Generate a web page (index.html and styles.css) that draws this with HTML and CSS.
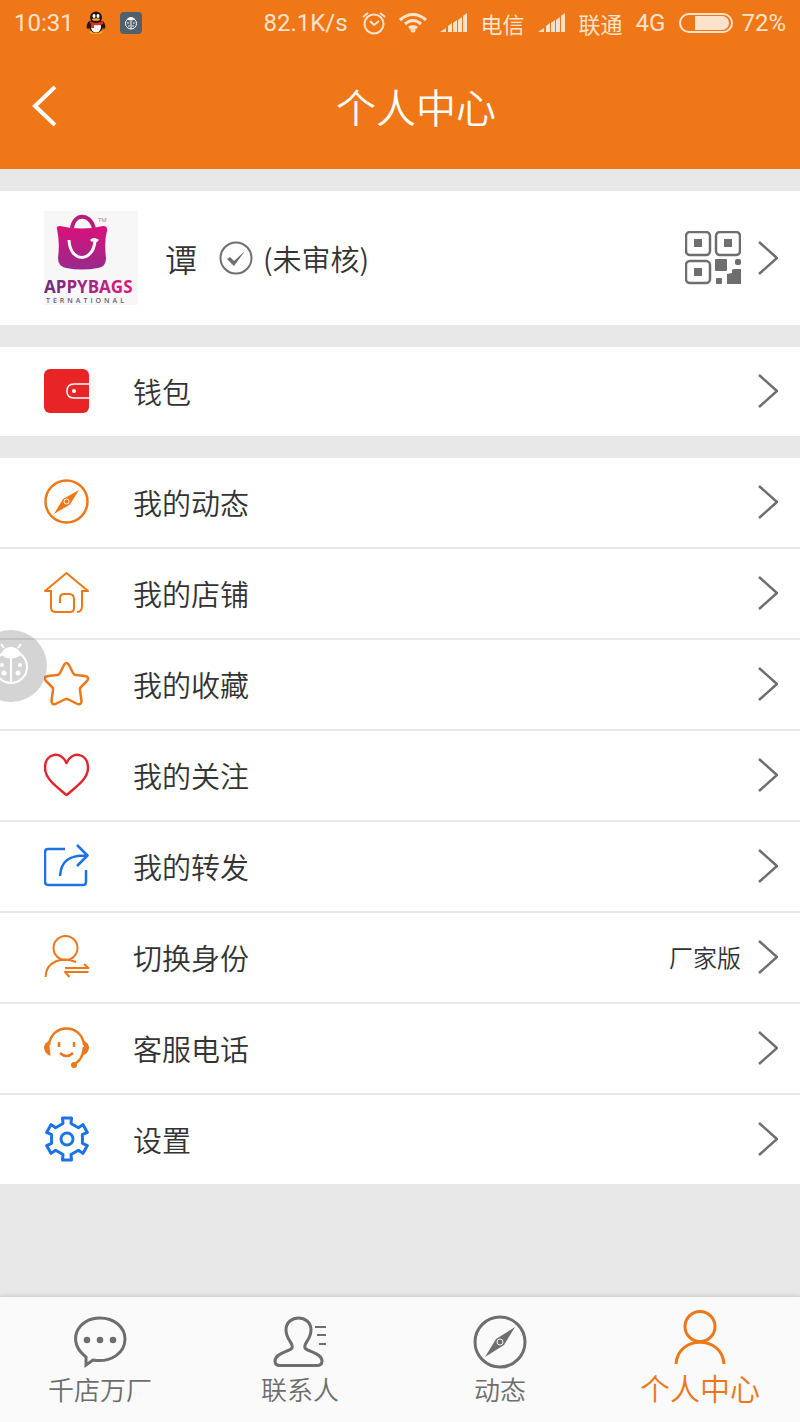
FILE: index.html
```html
<!DOCTYPE html>
<html lang="zh-CN">
<head>
    <meta charset="UTF-8">
    <meta name="viewport" content="width=device-width, initial-scale=1.0">
    <title>个人中心</title>
    <link rel="stylesheet" href="styles.css">
</head>
<body>

    <!-- shared shapes -->
    <svg class="defs" width="0" height="0">
        <symbol id="chevron" viewBox="0 0 20 34"><path d="M1 1l18 16L1 33"/></symbol>
        <symbol id="signal" viewBox="0 0 28 20"><path d="M0 19l6-4v4zM8 13l4-3v9H8zM13 10l4-3v12h-4zM18 7l4-3v15h-4zM23 3l4-3v19h-4z"/></symbol>
    </svg>

    <header class="top">
        <div class="status">
            <span class="status-text">10:31</span>
            <svg class="qq" viewBox="0 0 20 24">
                <ellipse cx="10" cy="21" rx="7" ry="2" fill="#f5a623"/>
                <path d="M3 10C0 14 0 17 2 18l3-2h10l3 2c2-1 2-4-1-8z" fill="#2a1512"/>
                <ellipse cx="10" cy="15" rx="7" ry="7" fill="#2a1512"/>
                <ellipse cx="10" cy="16" rx="5" ry="5.500" fill="#fff"/>
                <ellipse cx="10" cy="6.500" rx="6" ry="6" fill="#2a1512"/>
                <ellipse cx="8" cy="5" rx="1.500" ry="2" fill="#fff"/><ellipse cx="12" cy="5" rx="1.500" ry="2" fill="#fff"/>
                <ellipse cx="10" cy="8.500" rx="4" ry="1.300" fill="#f5a623"/>
                <path d="M3 10q7 4 14 0v3q-4 2-9 1v3H5v-4z" fill="#e0302d"/>
            </svg>
            <svg class="bug-app" viewBox="0 0 22 22">
                <rect width="22" height="22" rx="4" fill="#50606e"/>
                <circle cx="11" cy="11.500" r="5.500" fill="none" stroke="#fff"/>
                <path d="M7 7q4-4 8 0-4 3-8 0z" fill="#fff"/><path d="M11 9v8" stroke="#fff"/>
                <g fill="#fff"><circle cx="8" cy="11" r=".8"/><circle cx="14" cy="11" r=".8"/><circle cx="9" cy="14" r=".8"/><circle cx="13" cy="14" r=".8"/></g>
            </svg>

            <span class="status-text speed">82.1K/s</span>
            <svg class="alarm" viewBox="0 0 24 24">
                <circle cx="12" cy="13" r="9.500"/><path d="M8 10l4 4 5-4M1 6l5-4M23 6l-5-4"/>
            </svg>
            <svg class="wifi" viewBox="0 0 30 20">
                <path d="M2 7q13-11 26 0M7 11q8-7 16 0M11 15q4-3 8 0"/><circle cx="15" cy="17" r="1"/>
            </svg>
            <svg class="signal"><use href="#signal"/></svg>
            <span class="status-cn">电信</span>
            <svg class="signal"><use href="#signal"/></svg>
            <span class="status-cn">联通</span>
            <span class="status-text">4G</span>
            <svg class="battery" viewBox="0 0 54 20">
                <rect x="1" y="1" width="52" height="18" rx="9"/>
                <path d="M16 3h27a7 7 0 0 1 0 14H16z"/>
            </svg>
            <span class="status-text percent">72%</span>
        </div>

        <div class="title-bar">
            <button class="back" aria-label="返回">
                <svg viewBox="0 0 26 44"><path d="M23 3L3 22l20 19"/></svg>
            </button>
            <h1>个人中心</h1>
        </div>
    </header>

    <main>
        <a class="profile" href="#profile">
            <svg class="avatar" viewBox="0 0 94 94">
                <defs>
                    <linearGradient id="bag" x1="0" y1="0" x2="0" y2="1">
                        <stop offset="0" stop-color="#d9117a"/><stop offset="1" stop-color="#98298b"/>
                    </linearGradient>
                    <linearGradient id="brand" x1="0" y1="0" x2="1" y2="0">
                        <stop offset="0" stop-color="#6b2c7c"/><stop offset=".5" stop-color="#a82582"/><stop offset="1" stop-color="#e0187c"/>
                    </linearGradient>
                </defs>
                <rect width="94" height="94" fill="#f8f7f8"/>
                <path d="M28 17C30 2 46 2 50 17" fill="none" stroke="#b61d77" stroke-width="4"/>
                <path d="M13 18q-1-3 3-3 22 5 43 0 5 0 4 5-3 10-1 27 0 9-8 10-16 3-32 0-8-2-8-10 2-16-1-29z" fill="url(#bag)"/>
                <path d="M25 29c1 23 24 23 26 1M47 30q3-3 7 0" fill="none" stroke="#fff" stroke-width="3"/>
                <text class="tm" x="54" y="11">TM</text>
                <text class="brand" x="0" y="82" fill="url(#brand)">APPYBAGS</text>
                <text class="brand-sub" x="2" y="92">TERNATIONAL</text>
            </svg>
            <span class="name">谭</span>
            <svg class="check" viewBox="0 0 34 34">
                <circle cx="17" cy="17" r="15.500"/><path d="M8 18l3-2 4 4L26 10 15 25z"/>
            </svg>
            <span class="state">(未审核)</span>
            <svg class="qr" viewBox="0 0 56 54">
                <g class="frame">
                    <rect x="1" y="1" width="24" height="23" rx="4"/><rect x="31" y="1" width="24" height="23" rx="4"/><rect x="1" y="30" width="24" height="22" rx="4"/>
                </g>
                <path d="M9 8h8v8H9zM39 8h8v8h-8zM9 37h8v8H9z"/>
                <rect x="30" y="28" width="12" height="12" rx="1"/><rect x="50" y="28" width="6" height="6" rx="2"/><rect x="31" y="47" width="6" height="6" rx="1"/>
                <path d="M42 43l5-1v-3q1-1 2-1h7v15H42z"/>
            </svg>
            <svg class="chevron"><use href="#chevron"/></svg>
        </a>

        <nav class="menu">
            <a class="row" href="#wallet">
                <svg class="icon" viewBox="0 0 46 46">
                    <rect x="0" y="1" width="45" height="44" rx="6" fill="#e92427"/>
                    <path d="M45 16H30q-7 0-7 7t7 7h15" fill="none" stroke="#fff" stroke-width="1.500"/><circle cx="30" cy="23" r="2" fill="#fff"/>
                </svg>
                <span class="label">钱包</span>
                <svg class="chevron"><use href="#chevron"/></svg>
            </a>
        </nav>

        <nav class="menu">
            <a class="row" href="#moments">
                <svg class="icon orange" viewBox="0 0 46 46">
                    <circle cx="22.500" cy="22.500" r="21"/>
                    <path class="solid" d="M35 11L26 25.500 10 35l9-15z"/><circle class="hub" cx="22.500" cy="22.500" r="2.500"/>
                </svg>
                <span class="label">我的动态</span>
                <svg class="chevron"><use href="#chevron"/></svg>
            </a>
            <a class="row" href="#shop">
                <svg class="icon orange thin" viewBox="0 0 46 46">
                    <path d="M16 33v-5q0-4 4-4h5q5 0 5 5v9q0 4-4 4H12q-5 0-5-4V21H1L22.500 3 44 21h-6v15q0 6-5 6"/>
                </svg>
                <span class="label">我的店铺</span>
                <svg class="chevron"><use href="#chevron"/></svg>
            </a>
            <a class="row" href="#favorites">
                <svg class="icon orange" viewBox="0 0 46 46">
                    <path d="M20 4q2.500-4 5 0l4 8q1 2 3 2l9 1q5 1 2 5l-6 6q-1.500 1.500-1 3l1.500 11q0 4-4 3l-9-4.500q-2-1-4 0l-9 4.500q-4 1-4-3L9 29q.500-1.500-1-3l-6-6q-3-4 2-5l9-1q2 0 3-2z"/>
                </svg>
                <span class="label">我的收藏</span>
                <svg class="chevron"><use href="#chevron"/></svg>
            </a>
            <a class="row" href="#following">
                <svg class="icon red" viewBox="0 0 46 46">
                    <path d="M22.500 11C18-1 1 0 1 16c0 11 12 19 21.500 27C32 35 44 27 44 16 44 0 27-1 22.500 11z"/>
                </svg>
                <span class="label">我的关注</span>
                <svg class="chevron"><use href="#chevron"/></svg>
            </a>
            <a class="row" href="#shares">
                <svg class="icon blue" viewBox="0 0 46 46">
                    <path d="M21 6H4Q1 6 1 9v30q0 3 3 3h35q3 0 3-3V27M16 33c1-15 9-21 27-20.500M33 2l10.500 10.500L33 23"/>
                </svg>
                <span class="label">我的转发</span>
                <svg class="chevron"><use href="#chevron"/></svg>
            </a>
            <a class="row" href="#identity">
                <svg class="icon orange thin" viewBox="0 0 46 46">
                    <circle cx="21.500" cy="14" r="12"/><path d="M1.500 43C2 27 19 22 32 28M21 34h23.500L40 30M44.500 38H21l4.500 5"/>
                </svg>
                <span class="label">切换身份</span>
                <span class="value">厂家版</span>
                <svg class="chevron"><use href="#chevron"/></svg>
            </a>
            <a class="row" href="#service">
                <svg class="icon orange" viewBox="0 0 46 46">
                    <path d="M5 20C7-2 38-2 40 20M40 22q-1 12-9 17M16 28q6.500 6 13 0"/>
                    <path class="solid" d="M5 16q-5 2-5 7 1 6 6.500 8zM40 16q5 2 5 7-1 6-6 7z"/>
                    <circle class="solid" cx="30" cy="40" r="3"/><path d="M15 17v5M30 17v5"/>
                </svg>
                <span class="label">客服电话</span>
                <svg class="chevron"><use href="#chevron"/></svg>
            </a>
            <a class="row" href="#settings">
                <svg class="icon blue gear" viewBox="-23 -23 46 46">
                    <path d="M-4-15.500L-4.500-21h9L4-15.500 11.400-11.200 15.900-14.400 20.400-6.600 15.400-4.300V4.300L20.400 6.600 15.900 14.400 11.400 11.200 4 15.500 4.500 21h-9L-4 15.500-11.400 11.200-15.900 14.400-20.400 6.600-15.400 4.300V-4.300L-20.400-6.600-15.900-14.400-11.400-11.200z"/>
                    <circle r="6"/>
                </svg>
                <span class="label">设置</span>
                <svg class="chevron"><use href="#chevron"/></svg>
            </a>
        </nav>
    </main>

    <!-- floating assistant, sits half off the left edge -->
    <button class="floating" aria-label="助手">
        <svg viewBox="0 0 72 72">
            <circle cx="36" cy="37" r="16"/><path d="M36 27v26M29 18l-3-4M43 18l3-4"/>
            <path class="fill" d="M26 25q2-8 10-8t10 8q-10 7-20 0z"/>
            <g class="fill"><circle cx="27" cy="35" r="2"/><circle cx="45" cy="35" r="2"/><circle cx="29" cy="43" r="2.500"/><circle cx="43" cy="43" r="2.500"/></g>
        </svg>
    </button>

    <footer class="tabs">
        <a class="tab" href="#home">
            <svg viewBox="0 0 56 56">
                <path d="M14 43C-6 28 5 4 28 4c14 0 25 9 25 21 0 14-14 24-32 21l-7 5z"/>
                <g class="solid"><circle cx="15" cy="26" r="3.300"/><circle cx="28" cy="26" r="3.300"/><circle cx="41" cy="26" r="3.300"/></g>
            </svg>
            <span>千店万厂</span>
        </a>
        <a class="tab" href="#contacts">
            <svg viewBox="0 0 56 56">
                <path d="M20 34c2-5-6-8-6-18 0-16 25-16 25 0 0 10-8 13-6 18 3 4 17 5 17 13 0 3-2 4.500-5 4.500H8c-3 0-5-1.500-5-4.500 0-8 14-9 17-13z"/>
                <path class="lines" d="M43 13h11M45 21h9M47 30h7"/>
            </svg>
            <span>联系人</span>
        </a>
        <a class="tab" href="#news">
            <svg viewBox="0 0 56 56">
                <circle cx="28" cy="28" r="25"/>
                <path class="solid" d="M43 13L32 31 13 43l11-18z"/><circle class="hub" cx="28" cy="28" r="3"/>
            </svg>
            <span>动态</span>
        </a>
        <a class="tab active" href="#me">
            <svg viewBox="0 0 56 56">
                <circle cx="28" cy="16.500" r="15"/><path d="M4 54c2-29 46-29 48 0"/>
            </svg>
            <span>个人中心</span>
        </a>
    </footer>

</body>
</html>
```
FILE: styles.css
```css
* { box-sizing: border-box; }
body { margin: 0; min-height: 100vh; display: flex; flex-direction: column; position: relative; background: #e8e8e8; color: #333; font-family: "Noto Sans CJK SC", sans-serif; font-weight: 350; }
a { color: inherit; text-decoration: none; }
button { padding: 0; border: none; background: none; cursor: pointer; }
svg { display: block; flex: none; }
.defs { position: absolute; }

/* status bar + title */
.top { background: #ef7717; color: #fff; }
.status { display: flex; align-items: center; height: 46px; padding: 0 14px; color: #fde3cc; }
.status svg { fill: none; stroke: #fde3cc; stroke-width: 2; }
.status .qq, .status .bug-app { stroke: none; stroke-width: 1; }
.status-text { font: 400 24px/28px Roboto, sans-serif; }
.status-cn { margin: 0 13px; font-size: 22px; line-height: 28px; font-weight: 400; }
.qq { width: 20px; height: 24px; margin-left: 12px; }
.bug-app { width: 22px; height: 22px; margin-left: 14px; }
.speed { margin-left: auto; }
.alarm { width: 24px; height: 24px; margin-left: 14px; }
.wifi { width: 30px; height: 20px; margin: 0 12px; }
.status .wifi { stroke-width: 3; }
.status .signal { width: 28px; height: 20px; fill: #fde3cc; stroke: none; }
.battery { width: 54px; height: 20px; margin: 0 8px 0 14px; }
.status .battery path { fill: #fde3cc; stroke: none; }

.title-bar { display: grid; grid-template-columns: 1fr auto 1fr; align-items: center; height: 123px; padding: 0 0 3px 32px; }
.title-bar h1 { margin: 0; font-size: 40px; line-height: 60px; font-weight: 350; }
.back svg { width: 26px; height: 44px; fill: none; stroke: #fff; stroke-width: 4; }

/* profile card */
.profile { display: flex; align-items: center; height: 134px; margin: 22px 0; padding: 0 22px 0 44px; background: #fff; }
.avatar { width: 94px; height: 94px; }
.brand { font: 700 17px "Open Sans", sans-serif; }
.brand-sub { font: 600 7px "Open Sans", sans-serif; letter-spacing: 3px; fill: #6b5a70; }
.tm { font: 6px "Open Sans", sans-serif; fill: #a77; }
.name { margin-left: 27px; font-size: 32px; line-height: 48px; }
.check { width: 34px; height: 34px; margin: 0 10px 0 22px; fill: none; stroke: #6e6e6e; stroke-width: 2; }
.check path { fill: #6e6e6e; stroke: none; }
.state { font-size: 29px; line-height: 48px; }
.qr { width: 56px; height: 54px; margin-left: auto; fill: #6e6e6e; }
.qr .frame { fill: none; stroke: #6e6e6e; stroke-width: 2.5; }
.chevron { width: 20px; height: 34px; margin-left: 17px; fill: none; stroke: #6e6e6e; stroke-width: 2.5; }

/* menu rows */
.menu { margin-bottom: 22px; background: #fff; }
.row { display: flex; align-items: center; height: 91px; padding: 0 22px 2px 44px; border-bottom: 2px solid #e8e8e8; }
.row:last-child { height: 89px; border-bottom: none; }
.icon { width: 46px; height: 46px; fill: none; stroke-width: 2.5; stroke-linejoin: round; }
.thin { stroke-width: 2; }
.orange { stroke: #ee7718; --ink: #ee7718; }
.red { stroke: #e0262c; }
.blue { stroke: #1b73e8; }
.gear { stroke-width: 3; }
.solid { fill: var(--ink); stroke: none; }
.hub { fill: var(--ink); stroke: #fff; stroke-width: 1; }
.label { flex: 1; margin-left: 43px; font-size: 29px; line-height: 44px; }
.value { font-size: 24px; line-height: 36px; }

.floating { position: absolute; left: -25px; top: 630px; width: 72px; height: 72px; border-radius: 50%; background: rgba(0, 0, 0, .17); }
.floating svg { fill: none; stroke: #fff; stroke-width: 2; }
.floating .fill { fill: #fff; stroke: none; }

/* bottom tabs */
.tabs { display: grid; grid-template-columns: repeat(4, 1fr); height: 125px; margin-top: auto; background: #fafafa; box-shadow: 0 -1px 4px rgba(0, 0, 0, .15); }
.tab { display: flex; flex-direction: column; align-items: center; padding-top: 17px; color: #6e6e6e; --ink: #6e6e6e; font-size: 26px; line-height: 38px; }
.tab svg { width: 56px; height: 56px; fill: none; stroke: var(--ink); stroke-width: 3; }
.tab .solid { fill: var(--ink); stroke: none; }
.tab .hub { stroke: #fafafa; stroke-width: 1; }
.tab .lines { stroke-width: 2; }
.tab.active { padding-top: 13px; color: #ee7718; --ink: #ee7718; font-size: 30px; line-height: 42px; }
```
